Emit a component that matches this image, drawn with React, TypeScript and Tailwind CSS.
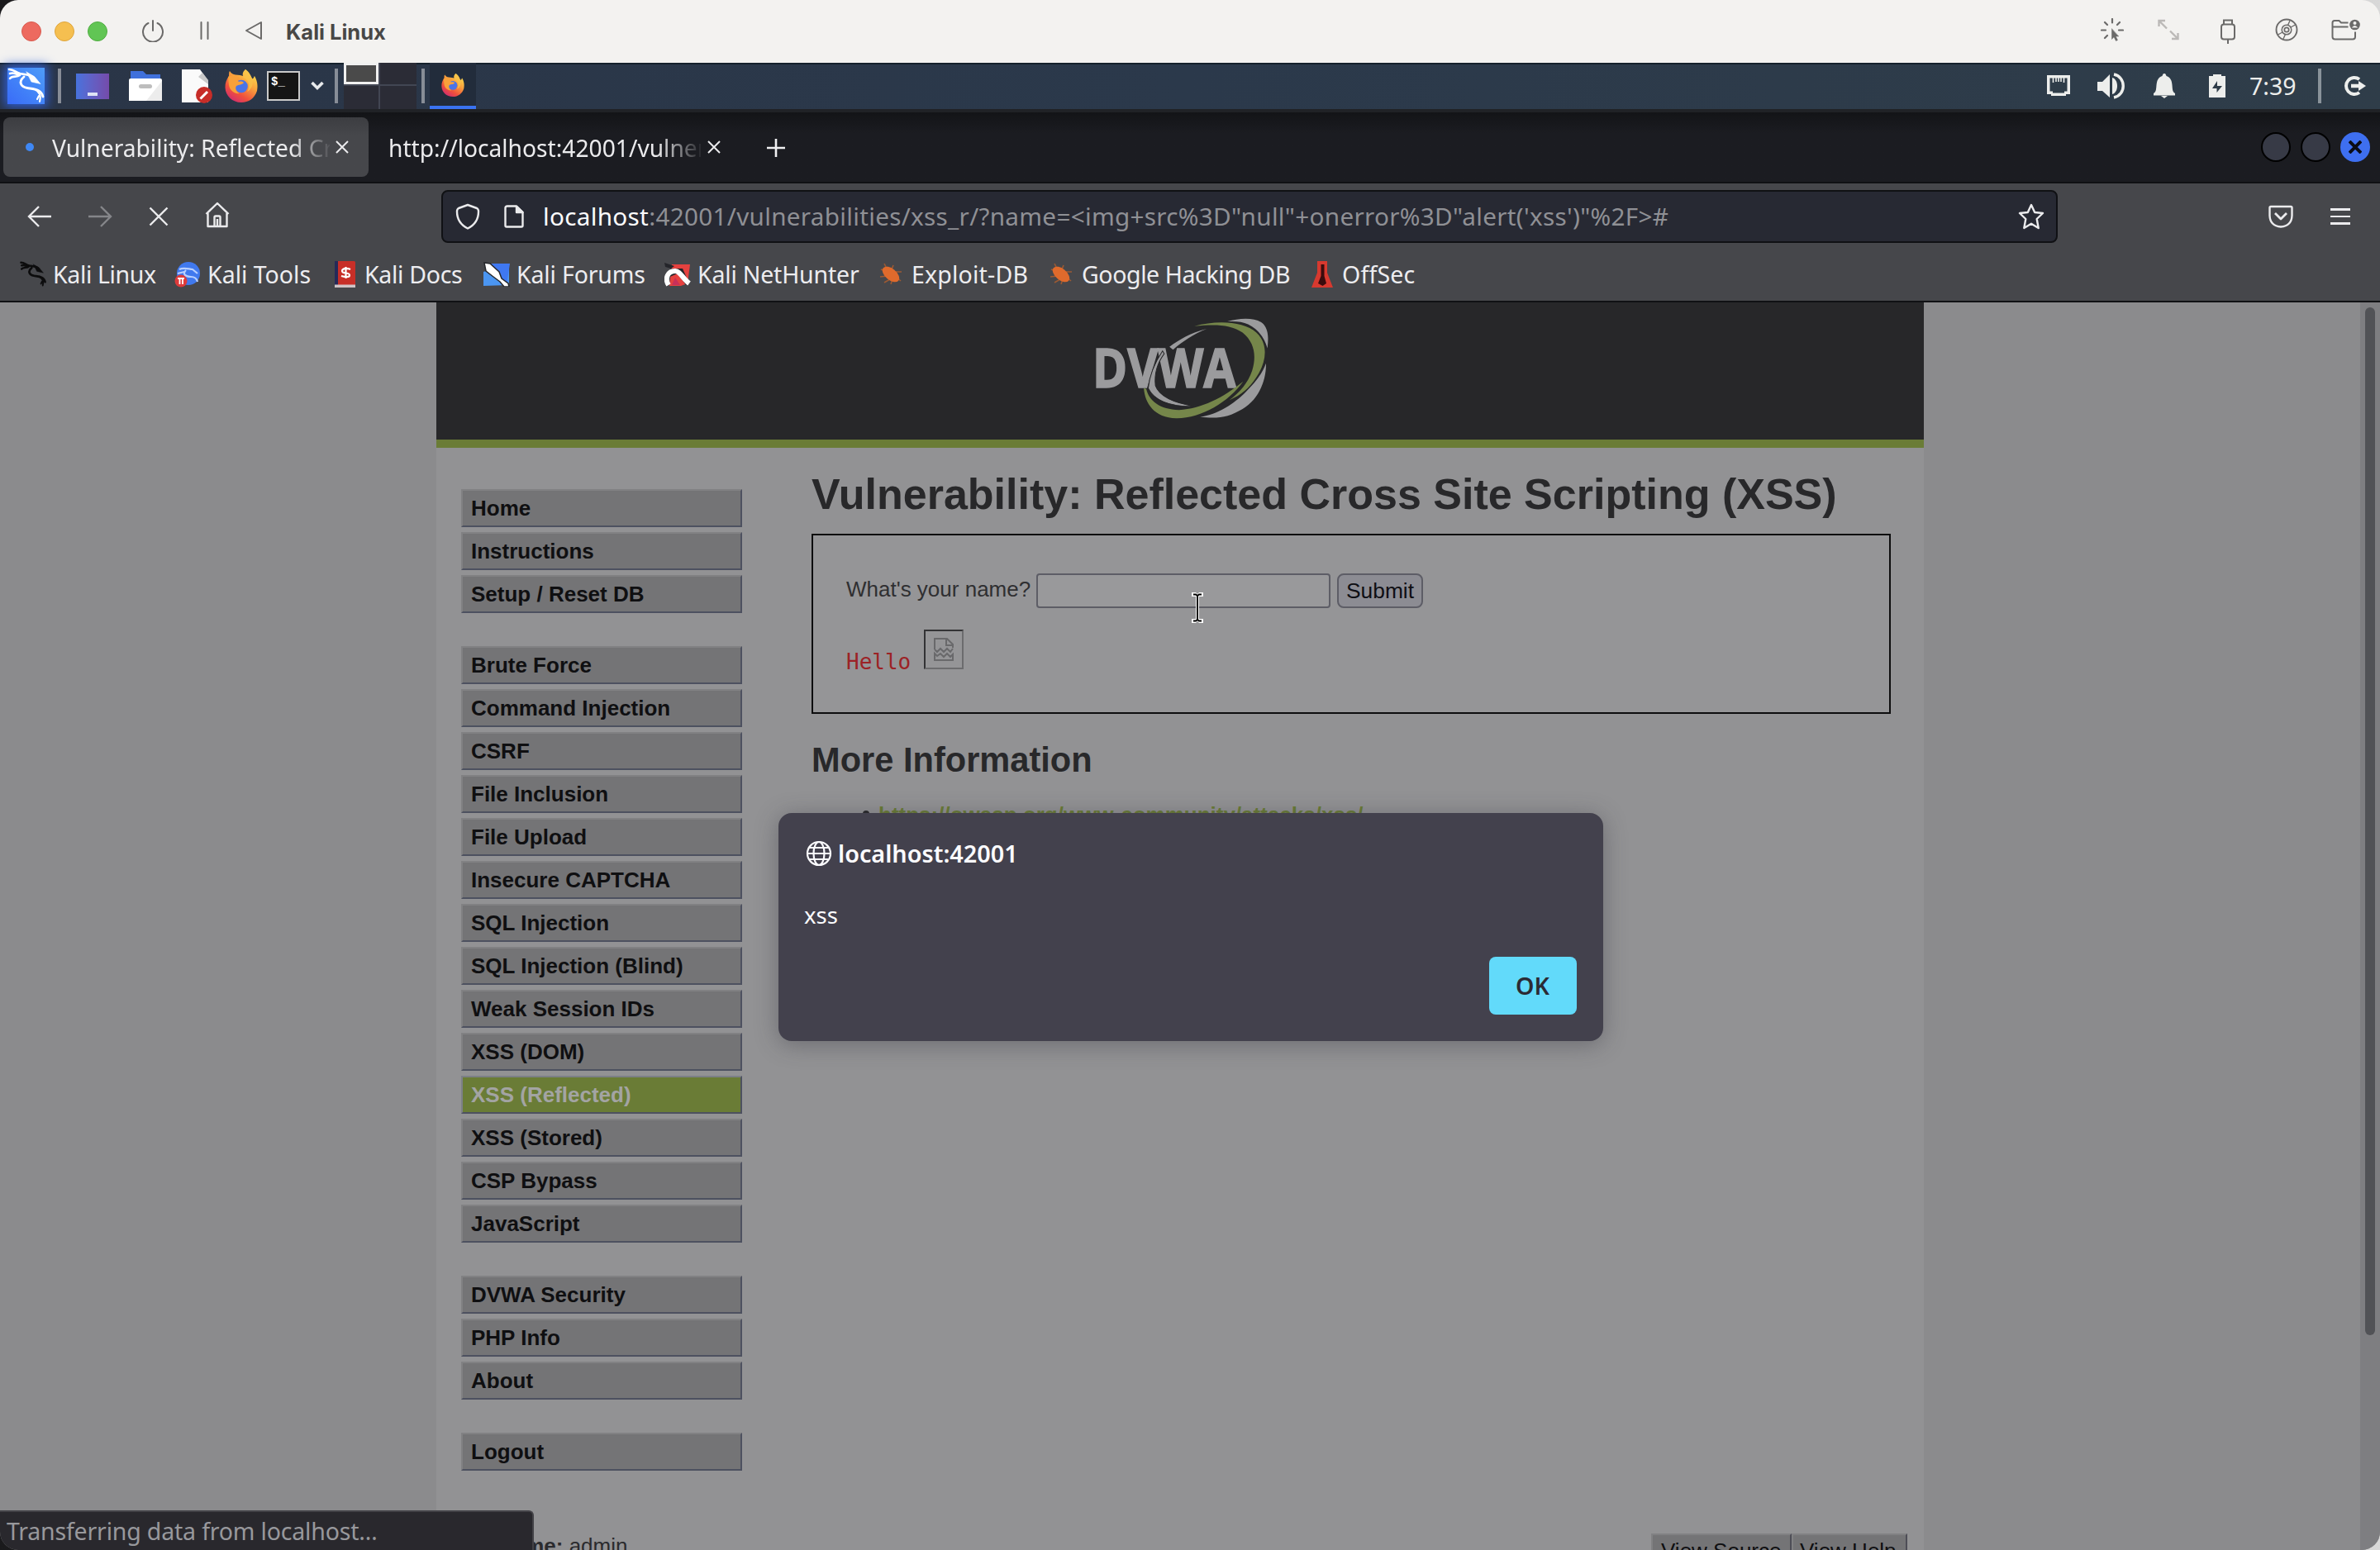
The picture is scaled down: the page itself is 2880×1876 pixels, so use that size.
import React from "react";

const NOTO = "font-['Noto_Sans',sans-serif]";

function Dragon({ className, color = "#fff", width = 2.6 }: { className: string; color?: string; width?: number }) {
  return (
    <svg viewBox="0 0 45 44" className={className} fill="none" stroke={color} strokeWidth={width} strokeLinecap="round">
      <path d="M2 2C7 2 10 5 15 7M3 7C8 5 10 8 15 9M3 13C6 9 11 12 15 9" />
      <path d="M14 7C20 8 26 8 31 11" />
      <path d="M23 5L33 11L40 19.5L29 17L27 13Z" fill={color} strokeWidth={0.6} />
      <path d="M20 11C13 17 16 23 24 24.500C33 26 41 26 43 35" strokeWidth={width * 1.1} />
      <path d="M33 26C39 29 41 34 39 41M38 34L36 38" strokeWidth={width * 0.8} />
    </svg>
  );
}

function Firefox({ className, id }: { className: string; id: string }) {
  return (
    <svg viewBox="0 0 40 40" className={className}>
      <defs>
        <linearGradient id={id} x1="0.85" y1="0.05" x2="0.25" y2="0.95">
          <stop offset="0" stopColor="#fbe04f" />
          <stop offset="0.4" stopColor="#f9a03c" />
          <stop offset="0.75" stopColor="#f0503c" />
          <stop offset="1" stopColor="#d5306a" />
        </linearGradient>
      </defs>
      <path
        fill={`url(#${id})`}
        d="M25 0C31 4 31 8 33 11C35 12 35 9 36 8C40 15 40 21 39 26C36 35 29 40 20 40C9 40 1 32 .5 22C.3 17 2 12 5 8C5 6 5 3 6 2C8 5 10 6 13 6.500C17 7 20 7 22 8C21 4 23 2 25 0Z"
      />
      <circle cx="20" cy="20.500" r="7.800" fill="#4a74e8" />
      <path fill="#f9a13a" d="M4 9C8 6 14 7 18 10C15 11 15 13 17 15C20 14 22 15 23 16C21 19 17 18 14 20C12 23 14 27 18 29C11 30 6 25 5 19Z" />
      <path fill="#f8c04a" d="M22 10C30 12 31 21 27 27C33 24 35 17 33 11C31 5 27 3 25 0C22 4 24 7 22 10Z" opacity="0.8" />
    </svg>
  );
}

function TitleBar() {
  return (
    <div className="flex h-[76px] shrink-0 items-center bg-[#f3f2f0] text-[#6b6a69]">
      <div className="ml-[26px] flex gap-4">
        <div className="size-6 rounded-full border border-[#d95a4e] bg-[#ed6a5f]" />
        <div className="size-6 rounded-full border border-[#dfa53b] bg-[#f5bf50]" />
        <div className="size-6 rounded-full border border-[#50ad42] bg-[#61c554]" />
      </div>
      <svg viewBox="0 0 28 28" className="ml-[41px] size-7 -mt-0.5" fill="none" stroke="currentColor" strokeWidth="2" strokeLinecap="round">
        <path d="M14 2V14M8.500 5A12 12 0 1 0 19.500 5" />
      </svg>
      <svg viewBox="0 0 14 24" className="ml-[42px] h-6 w-3.5 -mt-0.5" fill="none" stroke="currentColor" strokeWidth="2" strokeLinecap="round">
        <path d="M2.500 2V22M10.500 2V22" />
      </svg>
      <svg viewBox="0 0 22 24" className="ml-[41px] h-6 w-[22px] -mt-0.5" fill="none" stroke="currentColor" strokeWidth="2" strokeLinejoin="round">
        <path d="M20 2V22L2 12Z" />
      </svg>
      <div className="ml-[28px] mt-0.5 font-[Inter,sans-serif] text-[25.5px] font-bold text-[#484746]">Kali Linux</div>
      <div className="ml-auto mr-[23px] flex items-center">
        <svg viewBox="0 0 28 28" className="size-7 -mt-1" fill="none" stroke="currentColor" strokeWidth="2.200" strokeLinecap="round">
          <path d="M14 1V5.500M5 5L8 8M23 5L20 8M1 14.500H6M22 14.500H27M5 24L8 21" />
          <path d="M13.500 13V25.500L16 22.700L18.500 27.500L20.500 26.500L18.200 22H21.500Z" fill="currentColor" strokeWidth="0.500" />
        </svg>
        <svg viewBox="0 0 26 28" className="ml-[41px] h-7 w-[26px] -mt-1" fill="none" stroke="#bbb9b7" strokeWidth="2.400">
          <path d="M1.500 10V3H9M2 3.500L11 12.500M24.500 18V25H17M24 24.500L15 15.500" />
        </svg>
        <svg viewBox="0 0 18 30" className="ml-[50px] h-[30px] w-[18px]" fill="none" stroke="currentColor" strokeWidth="2">
          <rect x="1" y="6.500" width="16" height="18" rx="3" />
          <path d="M4 6.500V1.500H14V6.500M9 25V30" />
        </svg>
        <svg viewBox="0 0 28 28" className="ml-[48px] size-7 -mt-1" fill="none" stroke="currentColor" strokeWidth="1.900">
          <circle cx="14" cy="14" r="12.500" />
          <circle cx="14" cy="14" r="5.800" strokeWidth="1.500" />
          <circle cx="14" cy="14" r="2.700" strokeWidth="1.700" />
          <path d="M15.500 8.500L18 3M19 11L24.500 8M12.500 19.500L10 25M9 17L3.500 20" strokeWidth="1.400" />
        </svg>
        <svg viewBox="0 0 36 28" className="ml-[40px] h-7 w-9 -mt-1" fill="none" stroke="currentColor" strokeWidth="2">
          <path d="M20.500 5.500H12L9.500 3H4Q1.500 3 1.500 5.500V22.500Q1.500 25.500 4.500 25.500H26Q29 25.500 29 22.500V16.500M1.500 10.500H20.500" />
          <circle cx="28.500" cy="8" r="6.300" fill="currentColor" stroke="none" />
          <circle cx="28.500" cy="6" r="2" fill="#f3f2f0" stroke="none" />
          <path d="M24.800 11.500Q28.500 6.500 32.200 11.500Z" fill="#f3f2f0" stroke="none" />
        </svg>
      </div>
    </div>
  );
}

function Panel() {
  return (
    <div className="flex h-14 shrink-0 items-center bg-linear-to-r from-[#2a3547] via-[#2b394b] to-[#2f3d49] shadow-[inset_0_2px_0_#15212c]">
      <div className="ml-[9px] flex h-11 w-[45px] items-center justify-center bg-linear-to-tr from-[#3a6bf7] to-[#4f9bf8] shadow-[0_0_12px_3px_#2f5fd8]">
        <Dragon className="h-11 w-[45px]" />
      </div>
      <div className="ml-[16px] h-[42px] w-1 bg-[#878d97]" />
      <div className="ml-[18px] flex h-[31px] w-10 items-end justify-center bg-linear-to-r from-[#4672dd] to-[#744bab] pb-1">
        <div className="h-1 w-3 bg-[#dfe3f5]" />
      </div>
      <svg viewBox="0 0 42 38" className="ml-[23px] h-[38px] w-[42px]">
        <path d="M3 1H18L22 5H39V14H3Z" fill="#3f70dc" />
        <path d="M3 10H39Q41 10 41 12V37H1V12Q1 10 3 10Z" fill="#fff" />
        <path d="M41 13V37H22Z" fill="#ececec" />
        <rect x="13" y="17" width="16" height="5" rx="2.500" fill="#bdbdbd" />
      </svg>
      <svg viewBox="0 0 38 42" className="ml-[22px] h-[42px] w-[38px]">
        <path d="M1 1H23L33 15V41H1Z" fill="#fafafa" />
        <path d="M21 10L33 19V14L26 5Z" fill="#c9c9c9" />
        <circle cx="28" cy="32" r="10" fill="#c72d28" />
        <path d="M23.500 36.500L32 28" stroke="#fff" strokeWidth="3" />
      </svg>
      <Firefox className="ml-[15px] h-10 w-10" id="ff-a" />
      <div className="ml-[11px] flex h-9 w-10 items-start border-2 border-[#c9c9c9] bg-[#151515] pl-[3px] pt-1 font-['Liberation_Mono',monospace] text-sm font-bold leading-none text-white">
        $_
      </div>
      <svg viewBox="0 0 16 12" className="ml-[13px] h-3 w-4" fill="none" stroke="#e8eaec" strokeWidth="3.600">
        <path d="M1.500 2L8 8.500L14.500 2" />
      </svg>
      <div className="ml-[13px] h-[42px] w-1 bg-[#878d97]" />
      <div className="ml-[7px] grid h-14 w-[88px] shrink-0 grid-cols-[42px_44px] grid-rows-[26px_28px] gap-0.5 bg-[#424653]">
        <div className="border-[3px] border-[#f0f0f0] bg-[#4a4a4a]" />
        <div className="bg-[#2b2c36]" />
        <div className="bg-[#2b2c36]" />
        <div className="bg-[#2b2c36]" />
      </div>
      <div className="ml-1.5 h-[42px] w-1 bg-[#878d97]" />
      <div className="ml-1.5 flex h-14 w-14 items-center justify-center border-b-4 border-[#3a73f2] bg-[#222c3b] pt-0.5">
        <Firefox className="size-7" id="ff-b" />
      </div>
      <div className="ml-auto mr-[17px] flex items-center text-[#edeeec]">
        <svg viewBox="0 0 30 28" className="h-7 w-[30px]">
          <path d="M1 1H29V24H24V26H6V24H1Z" fill="currentColor" />
          <path d="M4.500 4.500H25.500V20.500H22V22.500H8V20.500H4.500Z" fill="#2f3d49" />
          <path d="M8.500 4V10M12 4V9M15 4V9M18 4V9M21.500 4V10" stroke="currentColor" strokeWidth="1.600" />
        </svg>
        <svg viewBox="0 0 34 32" className="ml-[31px] h-8 w-[34px]">
          <path d="M1 11H7L16 2V30L7 22H1Z" fill="currentColor" />
          <path d="M19 6Q29 16 19 26ZM19 6C27 8 27 24 19 26Z" fill="currentColor" />
          <path d="M21 2C36 5 36 27 21 30" fill="none" stroke="currentColor" strokeWidth="3.400" />
        </svg>
        <svg viewBox="0 0 28 30" className="ml-[34px] h-[30px] w-7" fill="currentColor">
          <path d="M14 0C16 0 16 2 16.500 3C22 5 23 9 23.500 14C24 20 24 22 27 24V26.500H1V24C4 22 4 20 4.500 14C5 9 6 5 11.500 3C12 2 12 0 14 0ZM10 27H18L14 30Z" />
        </svg>
        <svg viewBox="0 0 20 28" className="ml-[40px] h-7 w-5">
          <path d="M5 0H15V2H20V28H0V2H5Z" fill="currentColor" />
          <path d="M10 8V14H16L9.500 22V17H4Z" fill="#2f3d49" />
        </svg>
        <div className={`ml-[29px] w-[59px] whitespace-nowrap text-[28.5px] leading-none ${NOTO}`}>7:39</div>
        <div className="ml-[24px] h-[42px] w-1 bg-[#8a939a]" />
        <svg viewBox="0 0 28 26" className="ml-[26px] h-[26px] w-7" fill="none" stroke="currentColor" strokeWidth="4">
          <path d="M20 5A10 10 0 1 0 20 21" />
          <path d="M10 13H21" strokeWidth="4.500" />
          <path d="M19 7L28 13L19 19Z" fill="currentColor" stroke="none" />
        </svg>
      </div>
    </div>
  );
}

function Cross({ className, strokeWidth = 2 }: { className: string; strokeWidth?: number }) {
  return (
    <svg viewBox="0 0 16 16" className={className} fill="none" stroke="#ebebed" strokeWidth={strokeWidth}>
      <path d="M1 1L15 15M15 1L1 15" />
    </svg>
  );
}

function TabStrip() {
  return (
    <div className="flex h-[90px] shrink-0 items-start border-t-4 border-b-2 border-t-[#202226] border-b-[#101114] bg-linear-to-b from-[#131417] to-[#1b1c21] to-30% pt-1.5">
      <div className="ml-1 flex h-[72px] w-[442px] items-center rounded-lg bg-linear-to-b from-[#3c3d41] to-[#46474b] to-30%">
        <div className="ml-[27px] size-2.5 rounded-full bg-[#3f88f5]" />
        <div className={`ml-[22px] mt-0.5 w-[336px] overflow-hidden whitespace-nowrap text-[28.2px] text-[#ebebed] [mask-image:linear-gradient(90deg,#000_86%,transparent_101%)] ${NOTO}`}>
          Vulnerability: Reflected Cross
        </div>
        <Cross className="ml-[7px] size-4" />
      </div>
      <div className="ml-6 flex h-[72px] items-center">
        <div className={`mt-0.5 w-[378px] overflow-hidden whitespace-nowrap text-[28.2px] text-[#ebebed] [mask-image:linear-gradient(90deg,#000_86%,transparent_101%)] ${NOTO}`}>
          http://localhost:42001/vulnerabilities
        </div>
        <Cross className="ml-2 size-4" />
      </div>
      <svg viewBox="0 0 24 24" className="ml-[55px] mt-[25px] size-6" stroke="#f0f0f2" strokeWidth="2.600">
        <path d="M12 1V23M1 12H23" />
      </svg>
      <div className="ml-auto mr-3 mt-[18px] flex gap-3">
        <div className="size-9 rounded-full border-2 border-black bg-[#373a46]" />
        <div className="size-9 rounded-full border-2 border-black bg-[#373a46]" />
        <div className="flex size-9 items-center justify-center rounded-full bg-[#3e6ff0]">
          <svg viewBox="0 0 16 16" className="size-4" stroke="#0b0d16" strokeWidth="4">
            <path d="M1 1L15 15M15 1L1 15" />
          </svg>
        </div>
      </div>
    </div>
  );
}

function NavBar() {
  return (
    <div className="flex h-[78px] items-center text-[#ebebed]">
      <svg viewBox="0 0 30 26" className="ml-[33px] h-[26px] w-[30px]" fill="none" stroke="currentColor" strokeWidth="2.400">
        <path d="M29 13H2M14 1L2 13L14 25" />
      </svg>
      <svg viewBox="0 0 30 26" className="ml-[43px] h-[26px] w-[30px]" fill="none" stroke="#85868a" strokeWidth="2.400">
        <path d="M1 13H28M16 1L28 13L16 25" />
      </svg>
      <Cross className="ml-11 size-6" strokeWidth={1.6} />
      <svg viewBox="0 0 30 32" className="ml-[44px] -mt-1 h-8 w-[30px]" fill="none" stroke="currentColor" strokeWidth="2.400" strokeLinejoin="round">
        <path d="M1.500 15L15 2L28.500 15M3.500 14V30H26.500V14M11.500 30V19Q11.500 17.500 13 17.500H17Q18.500 17.500 18.500 19V30M15 21V30" />
      </svg>
      <div className="ml-64 flex h-16 w-[1956px] items-center rounded-lg border-2 border-[#101114] bg-[#272933]">
        <svg viewBox="0 0 30 32" className="ml-[15px] h-8 w-[30px]" fill="none" stroke="currentColor" strokeWidth="2.400" strokeLinejoin="round">
          <path d="M15 2L26 6Q28 7 28 10C28 20 24 26 15 30.500C6 26 2 20 2 10Q2 7 4 6Z" />
        </svg>
        <svg viewBox="0 0 24 28" className="ml-[29px] h-7 w-6" fill="none" stroke="currentColor" strokeWidth="2.400" strokeLinejoin="round">
          <path d="M4 1.500H15L22.500 9V25Q22.500 26.500 21 26.500H3Q1.500 26.500 1.500 25V4Q1.500 1.500 4 1.500Z" />
          <path d="M15 2V9H22.500Z" fill="currentColor" />
        </svg>
        <div className={`ml-[23px] whitespace-nowrap text-[29.7px] tracking-[0.3px] text-[#8f9095] ${NOTO}`}>
          <span className="text-[#fbfbfe]">localhost</span>
          {`:42001/vulnerabilities/xss_r/?name=<img+src%3D"null"+onerror%3D"alert('xss')"%2F>#`}
        </div>
        <svg viewBox="0 0 32 32" className="ml-auto mr-[14px] size-8" fill="none" stroke="currentColor" strokeWidth="2.400" strokeLinejoin="round">
          <path d="M16 2L20.200 11L30 12L22.700 19L24.700 30L16 24.700L7.300 30L9.300 19L2 12L11.800 11Z" />
        </svg>
      </div>
      <svg viewBox="0 0 30 28" className="ml-[255px] h-7 w-[30px]" fill="none" stroke="currentColor" strokeWidth="2.400" strokeLinejoin="round">
        <path d="M3 2H27Q28.500 2 28.500 3.500V13Q28 25.500 15 26.500Q2 25.500 1.500 13V3.500Q1.500 2 3 2Z" />
        <path d="M8 10L15 17L22 10" strokeWidth="2.800" />
      </svg>
      <div className="ml-[45px] flex w-6 flex-col gap-1.5">
        <div className="h-[2.5px] bg-[#ebebed]" />
        <div className="h-[2.5px] bg-[#ebebed]" />
        <div className="h-[2.5px] bg-[#ebebed]" />
      </div>
    </div>
  );
}

function Bug() {
  return (
    <svg viewBox="0 0 28 28" className="h-7 w-7">
      <path d="M2 8L10 11M6 1L9 7M1 17L10 16M6 24L13 20M14 26L16 20M27 11L20 11M26 22L20 17M17 3L15 8" stroke="#9c5a33" strokeWidth="1.600" />
      <ellipse cx="14" cy="14" rx="12" ry="6.800" transform="rotate(40 14 14)" fill="#df6a2c" />
    </svg>
  );
}

const bookmarks: { label: string; pad: string; width: string; text: string; icon: React.ReactNode }[] = [
  {
    label: "Kali Linux",
    pad: "pl-6 gap-2",
    width: "w-[211px]",
    text: "tracking-[-0.35px]",
    icon: <Dragon className="h-8 w-8" color="#0c0c0d" width={3.4} />,
  },
  {
    label: "Kali Tools",
    pad: "gap-2",
    width: "w-[194px]",
    text: "tracking-[0px]",
    icon: (
      <svg viewBox="0 0 32 32" className="size-8">
        <circle cx="17" cy="15" r="14" fill="#4079ee" />
        <path d="M6 10C12 7 18 10 22 10L28 15M14 11C9 16 14 19 20 19C25 19 27 21 28 25M4 15L12 13" fill="none" stroke="#b9d0ff" strokeWidth="2.200" />
        <circle cx="8" cy="24" r="7.500" fill="#dd3b3b" />
        <path d="M4 21H12M6.500 21V28M10 21V28" stroke="#fff" strokeWidth="1.800" />
      </svg>
    ),
  },
  {
    label: "Kali Docs",
    pad: "gap-[11px]",
    width: "w-[180px]",
    text: "tracking-[-0.3px]",
    icon: (
      <svg viewBox="0 0 25 32" className="h-8 w-[25px]">
        <rect width="25" height="32" rx="1.500" fill="#c72f28" />
        <rect width="4" height="29" fill="#262a58" />
        <rect y="28.500" width="25" height="3.500" fill="#cfc4c6" />
        <path d="M19 10C14 8 9 9 9 12C9 16 18 13 18 17C18 20 13 19.500 8 18M13.500 7V21" fill="none" stroke="#fff" strokeWidth="2.200" />
      </svg>
    ),
  },
  {
    label: "Kali Forums",
    pad: "gap-2",
    width: "w-[219px]",
    text: "tracking-[-0.15px]",
    icon: (
      <svg viewBox="0 0 32 30" className="h-[30px] w-8">
        <path d="M0 29V12L31 2V28Z" fill="#4b96f2" />
        <path d="M9 2H32L28 28Z" fill="#3f78f2" />
        <path d="M1 1L8 2L19 12L22 20L30 26L31 30L25 30L20 24L12 18L3 11Z" fill="#fff" stroke="#26282c" strokeWidth="1.500" />
      </svg>
    ),
  },
  {
    label: "Kali NetHunter",
    pad: "gap-2",
    width: "w-[260px]",
    text: "tracking-[-0.2px]",
    icon: (
      <svg viewBox="0 0 32 30" className="h-[30px] w-8">
        <path d="M9 3H31L28 26L20 29H6Z" fill="#e5413f" />
        <path d="M0 1L12 5L8 8L1 6ZM2 20L8 8L22 8L30 26L26 28L16 14Z" fill="#24252a" />
        <path d="M5 28C0 20 4 11 13 11C19 11 22 20 30 26" fill="none" stroke="#fff" strokeWidth="6" />
        <path d="M9 28L13 19L19 28Z" fill="#c8305a" />
      </svg>
    ),
  },
  { label: "Exploit-DB", pad: "gap-[11px]", width: "w-[206px]", text: "tracking-[0.2px]", icon: <Bug /> },
  { label: "Google Hacking DB", pad: "gap-[11px]", width: "w-[317px]", text: "tracking-[-0.4px]", icon: <Bug /> },
  {
    label: "OffSec",
    pad: "gap-[11px]",
    width: "w-[130px]",
    text: "tracking-[0.2px]",
    icon: (
      <svg viewBox="0 0 26 32" className="h-8 w-[26px]">
        <path d="M7 0H19V14L26 32H0L7 14Z" fill="#d7392f" />
        <path d="M11.500 4H15.500V18L18 27L13.500 30L8 27L11.500 18Z" fill="#3a0c0d" />
      </svg>
    ),
  },
];

function BookmarkBar() {
  return (
    <div className={`flex h-[62px] items-center whitespace-nowrap text-[28.5px] text-[#ededf0] ${NOTO}`}>
      {bookmarks.map((b) => (
        <div key={b.label} className={`flex shrink-0 items-center ${b.pad} ${b.width}`}>
          <span className="shrink-0">{b.icon}</span>
          <span className={b.text}>{b.label}</span>
        </div>
      ))}
    </div>
  );
}

const menu = [
  ["Home", "Instructions", "Setup / Reset DB"],
  [
    "Brute Force",
    "Command Injection",
    "CSRF",
    "File Inclusion",
    "File Upload",
    "Insecure CAPTCHA",
    "SQL Injection",
    "SQL Injection (Blind)",
    "Weak Session IDs",
    "XSS (DOM)",
    "XSS (Reflected)",
    "XSS (Stored)",
    "CSP Bypass",
    "JavaScript",
  ],
  ["DVWA Security", "PHP Info", "About"],
  ["Logout"],
];

function Sidebar() {
  return (
    <nav className="ml-[30px] mt-[50px] flex w-[340px] shrink-0 flex-col gap-10">
      {menu.map((group) => (
        <div key={group[0]} className="flex flex-col gap-1.5">
          {group.map((item) => (
            <div
              key={item}
              className={
                item === "XSS (Reflected)"
                  ? "flex h-[46px] items-center border-2 border-t-[#7d8087] border-l-[#7d8087] border-r-[#4d5160] border-b-[#4d5160] bg-[#6a7c36] pl-2.5 text-[#a3a4a3]"
                  : "flex h-[46px] items-center border-2 border-t-[#818183] border-l-[#818183] border-r-[#4d5160] border-b-[#4d5160] bg-[#747476] pl-2.5 text-[#0f0f11]"
              }
            >
              <span className="text-[26px] font-bold leading-none">{item}</span>
            </div>
          ))}
        </div>
      ))}
      <div className="-ml-[11px] mt-[38px] whitespace-nowrap text-[26px] leading-none text-[#2b2b2e]">
        <span className="font-bold">Username:</span> admin
      </div>
    </nav>
  );
}

function Logo() {
  return (
    <svg viewBox="240 70 650 380" className="ml-[792px] mt-[16px] h-[127px] w-[217px]">
      <g fill="#9b9b9d">
        <path d="M735 88C780 74 840 72 865 97C885 120 884 150 880 185C870 150 850 118 810 98C790 89 765 86 735 88Z" />
        <path d="M875 240C876 300 850 370 790 405C740 435 700 442 636 434C700 425 760 385 800 345C835 310 860 280 875 240Z" />
        <path d="M660 115C600 130 560 155 525 180L538 190C575 160 610 135 660 115Z" />
      </g>
      <text x="246" y="327" fontFamily="Open Sans" fontWeight="700" fontSize="200" textLength="520" lengthAdjust="spacingAndGlyphs" fill="#9b9b9d" stroke="#9b9b9d" strokeWidth="5">
        DVWA
      </text>
      <path d="M500 195C470 240 452 290 448 330C470 375 530 398 620 396C550 385 490 365 474 320C470 280 480 240 506 205Z" fill="#9b9b9d" stroke="#272729" strokeWidth="3" />
      <g fill="#75864a">
        <path d="M615 105C700 82 795 88 840 128C885 170 877 235 840 290C815 330 785 355 742 373C780 345 810 310 825 265C840 215 835 165 790 128C745 98 690 98 615 105Z" />
        <path d="M432 330C436 385 470 438 550 439C640 440 740 380 792 306C720 365 640 405 560 409C490 408 450 375 441 333Z" />
      </g>
    </svg>
  );
}

function MainContent() {
  return (
    <main className="ml-[84px] mt-[30px] w-[1306px]">
      <h1 className="whitespace-nowrap text-[52px] font-bold leading-none text-[#28282a]">Vulnerability: Reflected Cross Site Scripting (XSS)</h1>
      <div className="mt-[22px] h-[218px] border-2 border-[#0d0d0e] bg-[#959597] pl-10 pt-[46px]">
        <div className="flex items-center">
          <span className="-mt-1 w-[230px] whitespace-nowrap text-[26px] leading-none text-[#2f2f31]">What's your name?</span>
          <div className="h-[42px] w-[356px] rounded border-2 border-[#5d5d66] bg-[#99999b]" />
          <div className="ml-2 flex h-[42px] w-[104px] items-center justify-center rounded-lg border-2 border-[#5d5d66] bg-[#8c8c93] pt-px text-[26.4px] leading-none text-[#0f0f14]">
            Submit
          </div>
        </div>
        <div className="mt-[26px] flex items-start">
          <span className="mt-[26px] w-[94px] font-['DejaVu_Sans_Mono',monospace] text-[26px] leading-none text-[#9c2226]">Hello</span>
          <div className="flex size-12 items-center justify-center border-2 border-t-[#333335] border-l-[#333335] border-r-[#6c6c6e] border-b-[#6c6c6e]">
            <svg viewBox="0 0 24 28" className="h-7 w-6" fill="none" stroke="#69696b" strokeWidth="2">
              <path d="M1 14V1H16L23 8V12M15 1V9H23M1 14L4 17L8 13L12 17L16 13L20 17L23 13M1 27V19L4 22L8 19L12 23L16 19L20 23L23 20V27Z" />
            </svg>
          </div>
        </div>
      </div>
      <h2 className="mt-[35px] text-[41.6px] font-bold leading-[42px] text-[#28282a]">More Information</h2>
      <ul className="mt-[32px] pl-[81px] text-[26px] leading-none">
        <li className="relative whitespace-nowrap font-bold text-[#6a7c36] underline">
          <span className="absolute -left-[19px] top-2 size-2 rounded-full bg-[#28282a]" />
          https://owasp.org/www-community/attacks/xss/
        </li>
      </ul>
    </main>
  );
}

function Page() {
  return (
    <div className="relative flex min-h-0 flex-1 overflow-hidden bg-[#8b8b8d] font-['Liberation_Sans',sans-serif]">
      <div className="ml-[528px] w-[1800px] bg-[#929294]">
        <div className="h-[176px] border-b-[10px] border-[#6a7c36] bg-[#272729] pt-[1px]">
          <Logo />
        </div>
        <div className="flex">
          <Sidebar />
          <MainContent />
        </div>
      </div>
      <div className="ml-auto flex w-6 flex-col items-center bg-[#7e7e81] pt-1.5">
        <div className="h-[1244px] w-3 rounded-full bg-[#515256]" />
      </div>

      <div className="absolute left-[1998px] top-[1490px] flex text-[26px] leading-none text-[#0f0f11]">
        <div className="h-11 w-[170px] border-2 border-t-[#818183] border-l-[#818183] border-r-[#4d4d56] border-b-[#4d4d56] bg-[#747476] pl-2.5 pt-1.5 whitespace-nowrap">View Source</div>
        <div className="h-11 w-[140px] border-2 border-t-[#818183] border-l-[#818183] border-r-[#4d4d56] border-b-[#4d4d56] bg-[#747476] pl-2 pt-1.5 whitespace-nowrap">View Help</div>
      </div>

      <svg viewBox="0 0 16 40" className="absolute left-[1441px] top-[350px] h-10 w-4">
        <path d="M1 1H6L8 3L10 1H15V6H10V33H15V38H10L8 36L6 38H1V33H6V6H1Z" fill="#fff" />
        <path d="M3 3.500H6L8 5L10 3.500H13M3 35.500H6L8 34L10 35.500H13M8 5V34" fill="none" stroke="#000" strokeWidth="2" />
      </svg>

      <div className={`absolute left-[942px] top-[618px] h-[276px] w-[998px] rounded-2xl bg-[#43414d] text-[#fbfbfe] shadow-[0_4px_28px_rgba(50,50,60,0.4)] ${NOTO}`}>
        <div className="flex items-center pl-[33px] pt-[33px]">
          <svg viewBox="0 0 32 32" className="size-8" fill="none" stroke="currentColor" strokeWidth="2.200">
            <circle cx="16" cy="16" r="14" />
            <ellipse cx="16" cy="16" rx="6.500" ry="14" />
            <path d="M2 16H30M4.500 9H27.500M4.500 23H27.500" strokeWidth="2" />
          </svg>
          <span className="ml-[7px] text-[28.800px] font-semibold leading-8">localhost:42001</span>
        </div>
        <div className="pl-[31px] pt-[43px] text-[27.5px] leading-8">xss</div>
        <div className="ml-auto mr-8 mt-[34px] flex h-[70px] w-[106px] items-center justify-center rounded-lg bg-[#62dafa] pr-px text-[28.5px] font-semibold text-[#2b2a33]">
          OK
        </div>
      </div>

      <div className={`absolute bottom-0 left-0 flex h-12 w-[646px] items-center rounded-tr-md border-t-2 border-r-2 border-[#434247] bg-[#29282d] pl-2 text-[28.5px] tracking-[-0.18px] text-[#98989c] ${NOTO}`}>
        Transferring data from localhost…
      </div>
    </div>
  );
}

export default function App() {
  return (
    <div className="h-[1876px] w-[2880px] bg-linear-to-r from-[#1a1a1c] to-[#d8d8d8]">
      <div className="flex h-full flex-col overflow-hidden rounded-[22px]">
        <TitleBar />
        <Panel />
        <TabStrip />
        <div className="flex h-36 shrink-0 flex-col border-b-2 border-[#101114] bg-[#46474b] pt-[1px]">
          <NavBar />
          <BookmarkBar />
        </div>
        <Page />
      </div>
    </div>
  );
}
